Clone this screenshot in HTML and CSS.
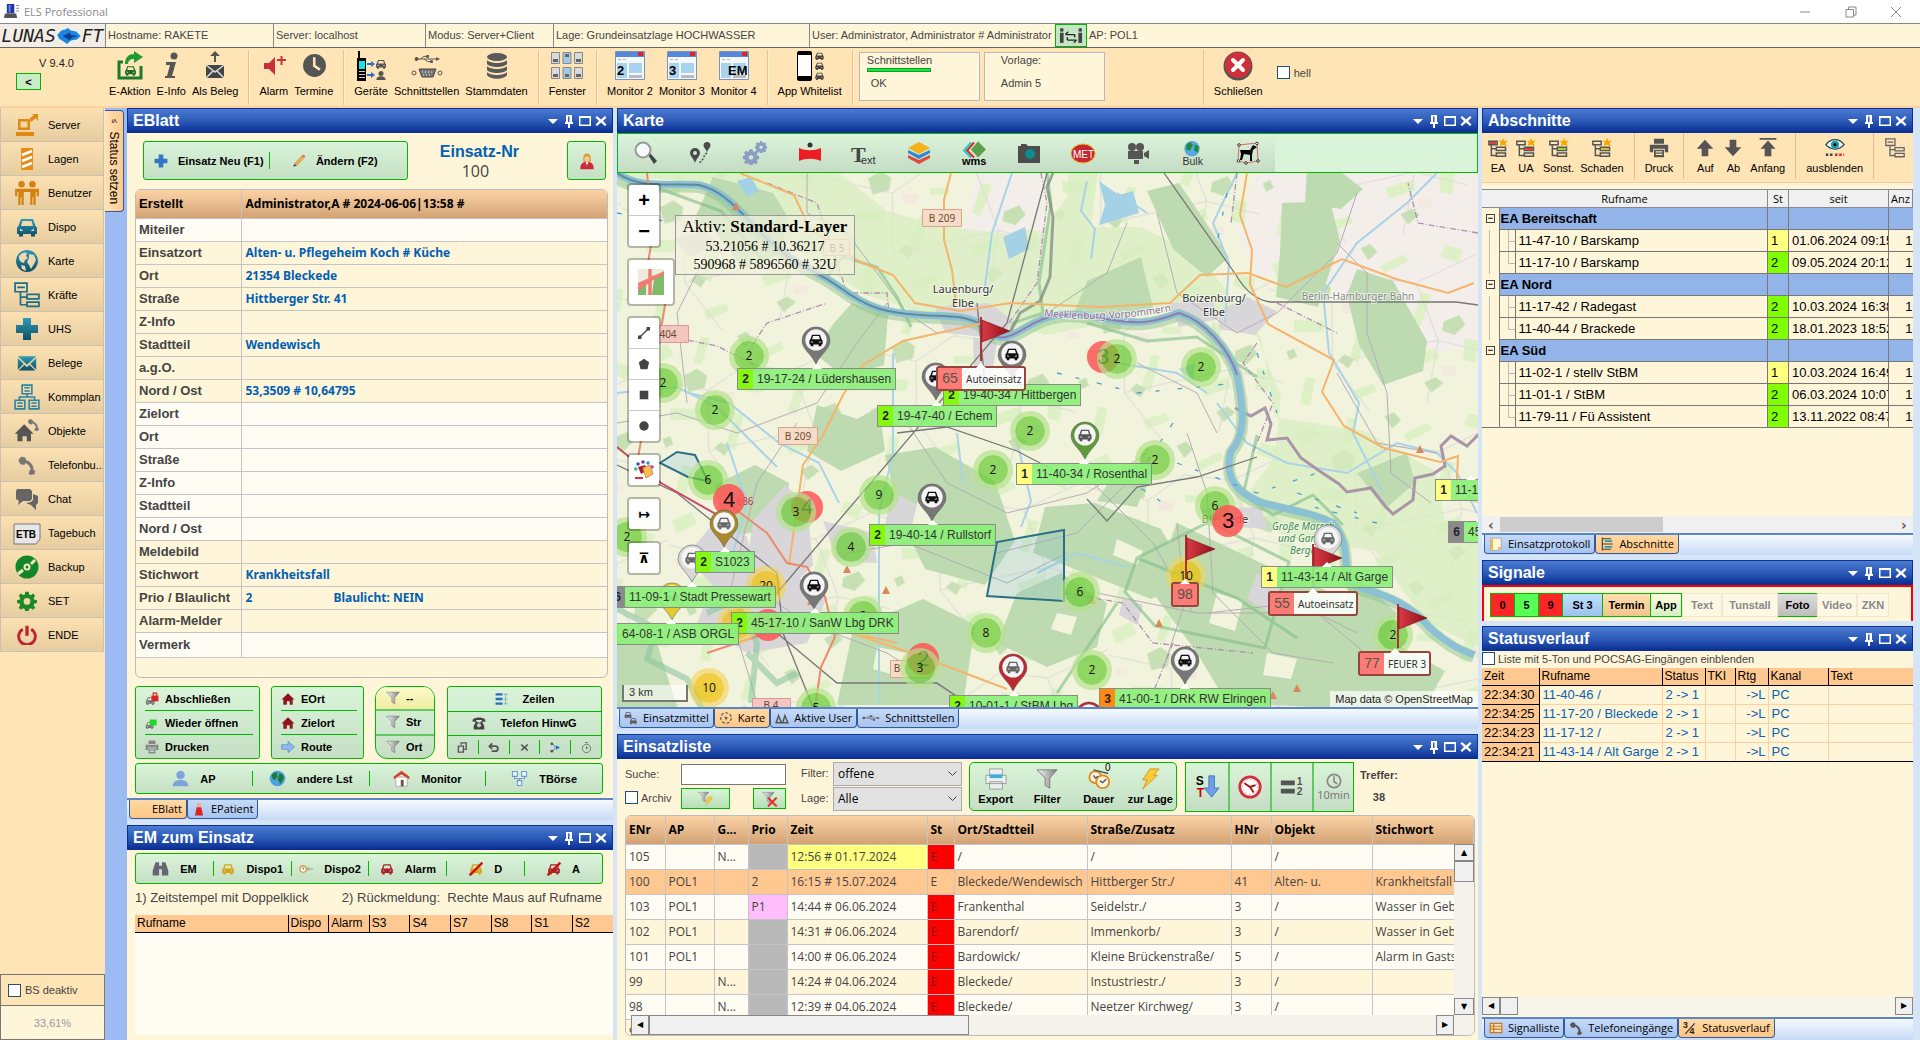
FILE: index.html
```html
<!DOCTYPE html>
<html lang="de">
<head>
<meta charset="utf-8">
<title>ELS Professional</title>
<link rel="stylesheet" href="styles.css">
</head>
<body>
<svg class="sprite" aria-hidden="true">
  <defs>
    <linearGradient id="gTeal" x1="0" y1="0" x2="0" y2="1"><stop offset="0" stop-color="#2f9ab5"/><stop offset="1" stop-color="#0e4f66"/></linearGradient>
    <linearGradient id="gFlag" x1="0" y1="0" x2="1" y2="0"><stop offset="0" stop-color="#d93a46"/><stop offset="1" stop-color="#8d1118"/></linearGradient>
    <linearGradient id="gSilver" x1="0" y1="0" x2="1" y2="0"><stop offset="0" stop-color="#fafafa"/><stop offset="1" stop-color="#7d7d7d"/></linearGradient>
  </defs>
  <symbol id="car" viewBox="0 0 24 24"><path fill-rule="evenodd" d="M6 4h12l2.500 7 1.500 1.500V19h-2v2.500h-4V19H8v2.500H4V19H2v-6.500L3.500 11zM7.500 6 6 11h12l-1.500-5zM5 13.500v2.500h3.500zM19 13.500v2.500h-3.500z"/></symbol>
  <symbol id="tri" viewBox="0 0 16 16"><path d="M3 6h10l-5 5z"/></symbol>
  <symbol id="thumbtack" viewBox="0 0 16 16"><path d="M5 2h6v7h1v2H9v4H7v-4H4V9h1zM7 3.500V9h1.500V3.500z" fill-rule="evenodd"/></symbol>
  <symbol id="maxi" viewBox="0 0 16 16"><path d="M2 3h12v10H2zM3.500 5v6.500h9V5z" fill-rule="evenodd"/></symbol>
  <symbol id="cross" viewBox="0 0 16 16"><path d="m4 3 4 3.500L12 3l1.500 1.500L10 8l3.500 3.500L12 13 8 9.500 4 13l-1.500-1.500L6 8 2.500 4.500z"/></symbol>
  <symbol id="house" viewBox="0 0 24 24"><path d="m12 2 11 11h-3v9h-5v-6h-5v6H4v-9H1z"/></symbol>
  <symbol id="plus" viewBox="0 0 24 24"><path d="M8 1h8v7h7v8h-7v7H8v-7H1V8h7z"/></symbol>
  <symbol id="globe" viewBox="0 0 24 24"><circle cx="12" cy="12" r="11"/><path fill="#eed9ae" d="M4 7c3-4 7-4 8-3l-1 3 2 2-3 2-1 3-3-1-2-3zM14 5l5 1 2 5-2 4-3 5-2-4-2-3 2-4zM6 16l4 1 1 5-4-2z"/></symbol>
  <symbol id="tree" viewBox="0 0 24 24"><path fill="none" stroke="currentColor" stroke-width="1.600" d="M1 1h11v8H1zM3 5h7M6 9v12h6M6 14h6M12 11.500h11v4H12zM12 18.500h11v4H12z"/></symbol>
  <symbol id="mail" viewBox="0 0 24 24"><path d="M1 4h22L12 14zM1 6l7 7-7 7zM23 6v14l-7-7zM2 21l7-7 3 3 3-3 7 7z"/></symbol>
  <symbol id="phone" viewBox="0 0 24 24"><path d="M1.500 6 5 2l5 1 1 3c6 2.500 9 7 9 12l2 1.500-1 3.500-5 1-2-1.500 1-4 1.500-1c-.5-4-3-6.500-6.500-8L9 12l-5-1z"/></symbol>
  <symbol id="org" viewBox="0 0 24 24"><path fill="none" stroke="currentColor" stroke-width="1.500" d="M7.500 1h9v8h-9zM1 15h9v8H1zM14 15h9v8h-9zM12 9v3M5 15v-3h14v3M9.500 3.500h5M9.500 6.500h5M3 17.500h5M3 20.500h5M16 17.500h5M16 20.500h5"/></symbol>
  <symbol id="funnel" viewBox="0 0 24 24"><path fill="url(#gSilver)" stroke="#777" d="M1 2h22l-8 9v11l-5-3v-8z"/></symbol>
  <symbol id="printer" viewBox="0 0 24 24"><path d="M6 1h12v6H6zM1 8h22v9h-4v-4H5v4H1zM6 14h12v9H6zM8 16h8v1.500H8zM8 19h8v1.500H8z" fill-rule="evenodd"/></symbol>
  <symbol id="clock" viewBox="0 0 24 24"><path fill-rule="evenodd" d="M12 1a11 11 0 1 1 0 22 11 11 0 0 1 0-22zM10.500 4v9l6 4 1.500-2-5-3.500V4z"/></symbol>
  <symbol id="gear" viewBox="0 0 24 24"><path fill-rule="evenodd" d="M10 1h4l.6 3.200 2 .9L19.300 3l2.500 2.600-1.800 2.700.9 2.200 3.100.5v3.500l-3.200.6-.9 2.100 1.900 2.800-2.500 2.500-2.700-1.900-2.100.9-.6 3h-4l-.6-3-2.100-.9L4.600 22.500 2 20l1.900-2.800-.9-2.100-3-.6V11l3-.6.9-2.100L2 5.600 4.600 3l2.700 1.900 2.100-.8zM12 8.500a4 4 0 1 0 0 8 4 4 0 0 0 0-8z"/></symbol>
  <symbol id="win" viewBox="0 0 30 30"><path fill="#f4f8fc" stroke="#7d93b8" d="M.5.5h29v28H.5z"/><path fill="#5588dd" d="M1 1h28v5H1z"/><path fill="#d22" d="M23 1h5v4h-5z"/><path fill="#a9d4f0" d="M2 12h10v15H2zM14 12h13v10H14z"/><path fill="#bbb" d="M14 24h13v3H14zM3 8h3v1H3zM8 8h3v1H8z"/></symbol>
  <symbol id="eatree" viewBox="0 0 24 24"><path fill="none" stroke="#555" stroke-width="1.800" d="M1 4h10v4H1zM4 8v13h6M4 13h6M10 11h11v4H10zM10 18h11v4H10z"/><path fill="#f5a800" d="m18 0 1.700 3.500 4.300-.5-3 3 1.500 4-4.500-2-4 2 1.200-4-2.200-3 3.500.5z"/></symbol>
  <symbol id="pin" viewBox="0 0 32 42"><path fill="currentColor" stroke="#555" stroke-width=".6" d="M16 1a15 15 0 0 1 15 15c0 9-10 14-15 25C11 30 1 25 1 16A15 15 0 0 1 16 1z"/><circle cx="16" cy="15" r="11.500" fill="#f5f5f5"/><use href="#car" x="7.500" y="6.500" width="17" height="17" fill="var(--car,#111)"/></symbol>
  <symbol id="flag" viewBox="0 0 32 46"><path fill="#a33" d="M1 1h2v44H1z"/><path fill="url(#gFlag)" stroke="#7a1015" stroke-width=".6" d="m3 4 28 11L3 26z"/></symbol>
  <symbol id="glass" viewBox="0 0 24 24"><path d="m15 14 2-2 7 8-3 3z" fill="#444"/><circle cx="10" cy="9" r="7.500" fill="#f6f9fa" stroke="#999" stroke-width="2"/></symbol>
  <symbol id="man" viewBox="0 0 24 24"><circle cx="12" cy="7" r="6"/><path d="M1 23c0-6 4-9 11-9s11 3 11 9z"/></symbol>
  <symbol id="usb" viewBox="0 0 40 12"><path d="M2 6h34M10 6l5-4h5M16 6l5 4h5" fill="none" stroke="currentColor" stroke-width="1.500"/><circle cx="4" cy="6" r="3"/><path d="m34 3 6 3-6 3zM19 0h4v4h-4zM25 8h4v4h-4z"/></symbol>
  <symbol id="bolt" viewBox="0 0 24 24"><path fill="#fbcb3a" stroke="#d89316" d="M12 1h10l-6 7h4L4 23l5-10H4z"/></symbol>
</svg>

<div class="titlebar">
  <svg class="lamp" viewBox="0 0 16 16"><path fill="#2338a8" d="M3 0h8v10H3z"/><path fill="#6a86e8" d="M5 1h2v8H5z"/><path fill="#555" d="M1 10h12l1 5H0z"/><path fill="#888" d="M13 1h3v1h-3zM13 4h3v1h-3zM13 7h3v1h-3z"/></svg>
  <span>ELS Professional</span>
  <div class="wincontrols">
    <button aria-label="Minimieren"><svg viewBox="0 0 12 12"><path d="M1 6h10"/></svg></button>
    <button aria-label="Verkleinern"><svg viewBox="0 0 12 12"><path d="M1 3.500h7.500V11H1zM3.500 3V1H11v8H9"/></svg></button>
    <button aria-label="Beenden"><svg viewBox="0 0 12 12"><path d="m1 1 10 10M11 1 1 11"/></svg></button>
  </div>
</div>

<div class="infobar">
  <div class="logo"><span>LUNAS</span><svg viewBox="0 0 26 20"><path fill="#1d86e0" d="M0 9c3-4 5-6 8-6l4-2 3 3 6 1 5 5-4 4-7 1-4 4-4-3-5-3z"/><path fill="#0c3f92" d="M6 10l8-4 1 3 8 1-7 2-2 3z"/></svg><span>FT</span></div>
  <span class="cell c-host">Hostname: RAKETE</span>
  <span class="cell c-server">Server: localhost</span>
  <span class="cell c-mode">Modus: Server+Client</span>
  <span class="cell c-lage">Lage: Grundeinsatzlage HOCHWASSER</span>
  <span class="cell c-user">User: Administrator, Administrator # Administrator</span>
  <button class="swap" aria-label="Benutzer wechseln"><svg viewBox="0 0 26 18"><circle cx="3" cy="3" r="2"/><path d="M1 6h4v11H1z"/><circle cx="23" cy="3" r="2"/><path d="M21 6h4v11h-4z"/><path d="M7 8h10M7 8l3-3M17 8v3M19 14H9M19 14l-3 3M9 14v-3" fill="none" stroke="#222" stroke-width="1.500"/></svg></button>
  <span class="cell c-ap">AP: POL1</span>
</div>

<div class="toolbar">
  <div class="version"><span>V 9.4.0</span><button>&lt;</button></div>
  <div class="tgroup">
    <button class="tool"><svg viewBox="0 0 28 30"><path fill="none" stroke="#1b7a2c" stroke-width="3" d="M7 11H3v16h22V15"/><path fill="#1f9a35" d="M9 13c0-7 4-10 9-10V0l9 6-9 6V8c-4 0-6 2-6 5z"/><use href="#car" x="8" y="13" width="13" height="13" fill="#1b6a2c"/></svg>E-Aktion</button>
    <button class="tool"><svg viewBox="0 0 28 30"><circle cx="17" cy="5" r="3.500" fill="#555"/><path fill="#555" d="M9 11h10l-4 14h3v2H8v-2h2l3-11H9z"/></svg>E-Info</button>
    <button class="tool"><svg viewBox="0 0 28 30"><path fill="#555" d="m14 0 5 5h-4v6h-2V5H9z"/><path fill="#444" d="M5 14h18v13H5z"/><path fill="none" stroke="#ddd" stroke-width="1.500" d="m5 14 9 7 9-7M5 27l7-7M23 27l-7-7"/></svg>Als Beleg</button>
  </div>
  <div class="tgroup">
    <button class="tool"><svg viewBox="0 0 28 30"><path fill="#c9303a" d="M4 12h5l6-6v18l-6-6H4z"/><path stroke="#c9303a" stroke-width="2" d="M17 9h9M21.500 5v9"/></svg>Alarm</button>
    <button class="tool"><svg viewBox="0 0 28 30"><use href="#clock" x="2" y="2" width="25" height="25" fill="#555"/></svg>Termine</button>
  </div>
  <div class="tgroup">
    <button class="tool"><svg class="w32" viewBox="0 0 32 30"><path d="M3 0h2v7h6v23H2V7h1z"/><path fill="#18e0e8" d="M4 10h6v8H4z"/><path fill="#ccc" d="M4 20h6v1H4zM4 23h6v1H4zM4 26h6v1H4z"/><path fill="#2a6fd0" d="M12 12h4v-2l4 3-4 3v-2h-4zM12 23h4v-2l4 3-4 3v-2h-4z"/><use href="#car" x="20" y="7" width="12" height="12" fill="#555"/><use href="#man" x="21" y="19" width="10" height="11" fill="#555"/></svg>Geräte</button>
    <button class="tool"><svg class="w32" viewBox="0 0 32 30"><use href="#usb" x="3" y="3" width="26" height="10" fill="#555" color="#555"/><path fill="#777" stroke="#444" d="M8 18h17l-3 8H11z"/><circle cx="3" cy="22" r="2" fill="none" stroke="#555"/><circle cx="29" cy="22" r="2" fill="none" stroke="#555"/><path stroke="#eee" stroke-dasharray="1 2" d="M11 21h11M12 24h9"/></svg>Schnittstellen</button>
    <button class="tool"><svg viewBox="0 0 28 30"><g fill="#5a5a5a"><ellipse cx="14" cy="6" rx="10" ry="4"/><path d="M4 9c3 4 17 4 20 0v4c-3 4-17 4-20 0zM4 15c3 4 17 4 20 0v4c-3 4-17 4-20 0zM4 21c3 4 17 4 20 0v3c-3 5-17 5-20 0z"/></g></svg>Stammdaten</button>
  </div>
  <div class="tgroup">
    <button class="tool"><svg class="w32" viewBox="0 0 32 30"><g fill="#d8dadc" stroke="#888"><path d="M.5 1.500h8v11h-8zM23.500 1.500h8v11h-8zM.5 16.500h8v11h-8zM23.500 16.500h8v11h-8z"/><path fill="#9ccbe8" d="M12 1.500h8v11h-8zM12 16.500h8v11h-8z"/></g><path fill="#666" d="M2 8h5v3H2zM14 3h4v3h-4zM25 8h5v3h-5zM2 23h5v3H2zM14 23h4v3h-4zM25 23h5v3h-5z"/></svg>Fenster</button>
  </div>
  <div class="tgroup">
    <button class="tool"><svg class="w32" viewBox="0 0 30 30"><use href="#win"/><text x="2" y="24">2</text></svg>Monitor 2</button>
    <button class="tool"><svg class="w32" viewBox="0 0 30 30"><use href="#win"/><text x="2" y="24">3</text></svg>Monitor 3</button>
    <button class="tool"><svg class="w32" viewBox="0 0 30 30"><use href="#win"/><text x="9" y="24">EM</text></svg>Monitor 4</button>
  </div>
  <div class="tgroup">
    <button class="tool"><svg class="w32" viewBox="0 0 32 30"><rect x="3" width="15" height="30" rx="2"/><path fill="#fff" d="M4 4h13v21H4z"/><use href="#car" x="20" width="11" height="10" fill="#444"/><use href="#car" x="20" y="10" width="11" height="10" fill="#444"/><use href="#car" x="20" y="20" width="11" height="10" fill="#444"/></svg>App Whitelist</button>
  </div>
  <div class="statusboxes">
    <div class="sbox"><span>Schnittstellen</span><i class="ok-line"></i><span class="ind">OK</span></div>
    <div class="sbox tmpl"><span>Vorlage:</span><span>Admin 5</span></div>
  </div>
  <div class="tgroup">
    <button class="tool"><svg class="w32" viewBox="0 0 32 30"><circle cx="16" cy="15" r="14.500" fill="#555"/><circle cx="16" cy="14" r="13" fill="#cf2f38"/><path stroke="#fff" stroke-width="4" stroke-linecap="round" d="m11 9 10 10M21 9 11 19"/></svg>Schließen</button>
  </div>
  <label class="hell"><input type="checkbox">hell</label>
</div>

<div class="workspace">
  <nav class="side">
    <button><svg viewBox="0 0 24 24" fill="#e08a12"><path d="M3 6h12v11H3zM5.500 8.500v6h7v-6zM1 19h18v4H1zM14 6l5-4-3-1h7v7l-2-3-5 4z" fill-rule="evenodd"/></svg>Server</button>
    <button><svg viewBox="0 0 24 24"><path fill="#e58d14" d="M6 1h12v22H6z"/><path stroke="#fff" stroke-width="2.500" d="m7 8 10-4M7 14l10-4M7 20l10-4"/></svg>Lagen</button>
    <button><svg class="big" viewBox="0 0 24 24" fill="#d5810f"><circle cx="7" cy="4" r="3"/><circle cx="17" cy="4" r="3"/><path d="M1 8h22v7h-2v-4h-1v12h-2v-7h-1v7h-2V11h-6v12H7v-7H6v7H4V11H3v4H1z"/></svg>Benutzer</button>
    <button><svg fill="url(#gTeal)"><use href="#car"/></svg>Dispo</button>
    <button><svg fill="url(#gTeal)"><use href="#globe"/></svg>Karte</button>
    <button><svg class="big" color="#1d6f88"><use href="#tree"/></svg>Kräfte</button>
    <button><svg fill="url(#gTeal)"><use href="#plus"/></svg>UHS</button>
    <button><svg class="small" fill="url(#gTeal)"><use href="#mail"/></svg>Belege</button>
    <button><svg class="big" color="#2a86a0"><use href="#org"/></svg>Kommplan</button>
    <button><svg class="big" viewBox="0 0 28 28"><use href="#house" y="5" width="22" height="22" fill="#555"/><use href="#phone" x="14" width="14" height="14" fill="#777"/></svg>Objekte</button>
    <button><svg class="small" fill="#777"><use href="#phone"/></svg>Telefonbu...</button>
    <button><svg viewBox="0 0 24 24" fill="#666"><path d="M2 2h13l2 2v8l-2 2H8l-5 4 1-4-3-2V4zM18 7l5 2v7l-2 2v5l-5-5-5-2 5-1 2-2z"/></svg>Chat</button>
    <button><svg class="big" viewBox="0 0 28 24"><path fill="#e6e6e6" stroke="#777" d="M1 3h26v15l-4 5H1z"/><text class="etb" x="3" y="17">ETB</text></svg>Tagebuch</button>
    <button><svg viewBox="0 0 24 24"><circle cx="12" cy="12" r="11.500" fill="#14862a"/><circle cx="12" cy="12" r="3.500" fill="#f4e4c0"/><circle cx="12" cy="12" r="1.500" fill="#14862a"/><path stroke="#f4e4c0" stroke-width="3" d="m3 19 5-4M16 9l4-4"/></svg>Backup</button>
    <button><svg class="small" fill="#1a8a26"><use href="#gear"/></svg>SET</button>
    <button><svg class="small" viewBox="0 0 24 24"><path fill="none" stroke="#bd2630" stroke-width="3.500" d="M7 5a10 10 0 1 0 10 0"/><path stroke="#bd2630" stroke-width="4" d="M12 1v12"/></svg>ENDE</button>
    <div class="side-foot">
      <label><input type="checkbox">BS deaktiv</label>
      <span>33,61%</span>
    </div>
  </nav>

  <div class="strip"><button class="vtab"><span class="vicon">≤</span>Status setzen</button></div>

  <main class="cols">
  <div class="col">
    <section class="panel eblatt">
      <header class="bar"><h2>EBlatt</h2><button aria-label="Menü"><svg><use href="#tri"/></svg></button><button aria-label="Anheften"><svg><use href="#thumbtack"/></svg></button><button aria-label="Maximieren"><svg><use href="#maxi"/></svg></button><button aria-label="Schließen"><svg><use href="#cross"/></svg></button></header>
      <div class="eb-top">
        <div class="gbox eb-main">
          <button><svg fill="#3276c4"><use href="#plus"/></svg>Einsatz Neu (F1)</button>
          <button><svg viewBox="0 0 24 24"><path fill="#f0b040" stroke="#a86" d="m4 17 13-14 4 3L8 20z"/><path fill="#444" d="m2 22 2-5 4 3z"/><path fill="#d66" d="m17 3 2-2 4 3-2 2z"/></svg>Ändern (F2)</button>
        </div>
        <div class="enr"><b>Einsatz-Nr</b><span>100</span></div>
        <button class="gbox person" aria-label="Melder"><svg viewBox="0 0 24 24"><path fill="#e09a2e" d="M7 8a5 6 0 0 1 10 0v5H7z"/><circle cx="12" cy="9" r="3.500" fill="#f5c9a0"/><path fill="#cf2a3a" d="M3 23c0-7 3-10 9-10s9 3 9 10z"/><path fill="#fff" d="m10 13 2 5 2-5z"/></svg></button>
      </div>
      <div class="ebwrap">
      <table class="ebtable">
        <thead><tr><th>Erstellt</th><th>Administrator,A # 2024-06-06|13:58 #</th></tr></thead>
        <tbody>
        <tr class="w"><th>Miteiler</th><td></td></tr>
        <tr><th>Einsatzort</th><td>Alten- u. Pflegeheim Koch # Küche</td></tr>
        <tr><th>Ort</th><td>21354 Bleckede</td></tr>
        <tr><th>Straße</th><td>Hittberger Str. 41</td></tr>
        <tr><th>Z-Info</th><td></td></tr>
        <tr><th>Stadtteil</th><td>Wendewisch</td></tr>
        <tr><th>a.g.O.</th><td></td></tr>
        <tr><th>Nord / Ost</th><td>53,3509 # 10,64795</td></tr>
        <tr class="w"><th>Zielort</th><td></td></tr>
        <tr class="w"><th>Ort</th><td></td></tr>
        <tr class="w"><th>Straße</th><td></td></tr>
        <tr class="w"><th>Z-Info</th><td></td></tr>
        <tr class="w"><th>Stadtteil</th><td></td></tr>
        <tr class="w"><th>Nord / Ost</th><td></td></tr>
        <tr><th>Meldebild</th><td></td></tr>
        <tr><th>Stichwort</th><td>Krankheitsfall</td></tr>
        <tr><th>Prio / Blaulicht</th><td><span class="prio">2</span>Blaulicht: NEIN</td></tr>
        <tr><th>Alarm-Melder</th><td></td></tr>
        <tr class="w last"><th>Vermerk</th><td></td></tr>
        </tbody>
      </table>
      </div>
      <div class="eb-actions">
        <div class="gbox stack s1">
          <button><svg viewBox="0 0 24 24"><use href="#car" y="6" width="18" height="18" fill="#777"/><path fill="#d22" d="M11 6h12v10H11z"/><path fill="none" stroke="#d22" stroke-width="2" d="M14 6V2h6v4"/></svg>Abschließen</button>
          <button><svg viewBox="0 0 24 24"><use href="#car" y="8" width="16" height="16" fill="#777"/><path fill="#1ddb26" d="M8 6h12v10H8z"/><path fill="none" stroke="#ddd" stroke-width="2" d="M16 6V2h6v4"/></svg>Wieder öffnen</button>
          <button><svg fill="#888"><use href="#printer"/></svg>Drucken</button>
        </div>
        <div class="gbox stack s2">
          <button><svg fill="#8f1420"><use href="#house"/></svg>EOrt</button>
          <button><svg fill="#8f1420"><use href="#house"/></svg>Zielort</button>
          <button><svg viewBox="0 0 24 24"><path fill="#8fb8f0" stroke="#4a78c8" d="M1 8h11V2l11 10-11 10v-6H1z"/></svg>Route</button>
        </div>
        <div class="gbox stack s3">
          <button><svg><use href="#funnel"/></svg>--</button>
          <button><svg><use href="#funnel"/></svg>Str</button>
          <button><svg><use href="#funnel"/></svg>Ort</button>
        </div>
        <div class="gbox stack s4">
          <button><svg viewBox="0 0 24 24"><path fill="#2a6fc0" d="M1 2h12v4H1zM1 10h12v4H1zM1 18h12v4H1z"/><path fill="none" stroke="#9bb" stroke-width="2" d="M15 4h7M15 12h7M15 20h7M18 2v20"/></svg>Zeilen</button>
          <button><svg viewBox="0 0 24 24" fill="#444"><path d="M1 8c0-7 22-7 22 0v2h-6V7H7v3H1zM7 9h2v2h6V9h2l4 8v6H3v-6z"/><circle cx="12" cy="16" r="3.500" fill="#ccc"/></svg>Telefon HinwG</button>
          <div class="mini">
            <button aria-label="Kopieren"><svg viewBox="0 0 24 24"><path d="M3 9h11v13H3zM9 6V2h11v14h-4" fill="none" stroke="#555" stroke-width="3"/></svg></button>
            <button aria-label="Rückgängig"><svg viewBox="0 0 24 24"><path d="M3 9h13a5 5 0 0 1 0 11H8M9 3 3 9l6 6" fill="none" stroke="#555" stroke-width="4"/></svg></button>
            <button aria-label="Löschen"><svg fill="#555"><use href="#cross"/></svg></button>
            <button aria-label="Verteilen"><svg viewBox="0 0 24 24"><path d="M6 4l6 8-6 8" fill="none" stroke="#4a78c8" stroke-width="2"/><g fill="#555"><circle cx="4" cy="4" r="3"/><circle cx="4" cy="20" r="3"/><path fill="#2a6fd0" d="m13 7 9 5-9 5z"/></g></svg></button>
            <button aria-label="Zeit"><svg viewBox="0 0 24 24"><path d="M12 5a9 9 0 1 0 .1 0zM12 9v6l4-3M9 1h6" fill="none" stroke="#666" stroke-width="2"/></svg></button>
          </div>
        </div>
      </div>
      <div class="gbox hrow four">
        <button><svg class="i18" fill="#7ea4dc"><use href="#man"/></svg>AP</button>
        <button><svg class="i18" viewBox="0 0 24 24"><circle cx="12" cy="12" r="11" fill="#4aa3e0"/><path fill="#1d7a32" d="M4 7c3-4 7-4 8-3l-1 3 2 2-3 2-1 3-3-1-2-3zM14 5l5 1 2 5-2 4-3 5-2-4-2-3 2-4z"/></svg>andere Lst</button>
        <button><svg class="i18" viewBox="0 0 24 24"><path fill="#fff" stroke="#999" d="M4 10h16v13H4z"/><path fill="#d2402c" d="m12 1 11 8v4L12 6 1 13V9z"/><path fill="#654" d="M11 14h4v9h-4z"/></svg>Monitor</button>
        <button><svg class="i18" viewBox="0 0 24 24"><path fill="#eef6ff" stroke="#6a9ad0" stroke-width="1.500" d="M2 2h7v7H2zM15 2h7v7h-7zM9 15h6v7H9zM5 9v3h14V9M12 12v3"/></svg>TBörse</button>
      </div>
      <div class="tabs">
        <button class="tab on ebt">EBlatt</button>
        <button class="tab"><svg viewBox="0 0 24 24"><circle cx="12" cy="5" r="4" fill="#e7b48c"/><path fill="#d22" d="M8 9h8l3 14H5z"/></svg>EPatient</button>
      </div>
    </section>

    <section class="panel grow em">
      <header class="bar"><h2>EM zum Einsatz</h2><button aria-label="Menü"><svg><use href="#tri"/></svg></button><button aria-label="Anheften"><svg><use href="#thumbtack"/></svg></button><button aria-label="Maximieren"><svg><use href="#maxi"/></svg></button><button aria-label="Schließen"><svg><use href="#cross"/></svg></button></header>
      <div class="gbox hrow six">
        <button><svg class="i18" viewBox="0 0 24 24" fill="#667"><path d="M5 3h5v5h4V3h5l4 12v7h-9v-9h-4v9H1v-7z"/></svg>EM</button>
        <button><svg fill="#d8a312"><use href="#car"/></svg>Dispo1</button>
        <button><svg viewBox="0 0 24 24"><circle cx="7" cy="12" r="5.500" fill="#fff" stroke="#d98a30" stroke-width="2"/><path stroke="#999" stroke-width="2" d="M7 9v3h2M14 12h10M16 9v6"/></svg>Dispo2</button>
        <button><svg fill="#a8202a"><use href="#car"/></svg>Alarm</button>
        <button><svg viewBox="0 0 24 24"><use href="#car" fill="#d8a312"/><path stroke="#c11" stroke-width="4" d="M1 23 23 1"/></svg>D</button>
        <button><svg viewBox="0 0 24 24"><use href="#car" fill="#a8202a"/><path stroke="#c11" stroke-width="4" d="M1 23 23 1"/></svg>A</button>
      </div>
      <p class="hints"><span>1) Zeitstempel mit Doppelklick</span><span>2) Rückmeldung:&nbsp; Rechte Maus auf Rufname</span></p>
      <div class="emlist">
        <table class="grid13">
          <thead><tr><th class="em-n">Rufname</th><th>Dispo</th><th>Alarm</th><th>S3</th><th>S4</th><th>S7</th><th>S8</th><th>S1</th><th>S2</th></tr></thead>
        </table>
      </div>
    </section>
  </div>

  <div class="col">
    <section class="panel grow">
      <header class="bar"><h2>Karte</h2><button aria-label="Menü"><svg><use href="#tri"/></svg></button><button aria-label="Anheften"><svg><use href="#thumbtack"/></svg></button><button aria-label="Maximieren"><svg><use href="#maxi"/></svg></button><button aria-label="Schließen"><svg><use href="#cross"/></svg></button></header>
      <div class="maptools">
        <div class="mt-in">
        <button aria-label="Suchen"><svg><use href="#glass"/></svg></button>
        <button aria-label="Route"><svg viewBox="0 0 24 24"><path fill="#4a4a4a" fill-rule="evenodd" d="M7 7a5 5 0 0 1 5 5c0 3-4 6-5 10-1-4-5-7-5-10a5 5 0 0 1 5-5zM7 10a2 2 0 1 0 0 4 2 2 0 0 0 0-4zM19 1a3.500 3.500 0 0 1 3.500 3.500c0 2-3 4-3.500 7-.5-3-3.500-5-3.500-7A3.500 3.500 0 0 1 19 1z"/><path fill="none" stroke="#555" stroke-dasharray="2 1.500" stroke-width="1.500" d="M19 12c-4 2-2 6-8 10"/></svg></button>
        <button aria-label="Einstellungen"><svg viewBox="0 0 24 24" fill="#8e9cc8" stroke="#5a6aa0" stroke-width=".5"><use href="#gear" y="8" width="16" height="16"/><use href="#gear" x="12" y="0" width="12" height="12"/></svg></button>
        <button aria-label="Panorama"><svg viewBox="0 0 24 24"><circle cx="12" cy="4" r="2.500" fill="#333"/><path fill="#ee1c24" d="M1 7c7 3 15 3 22 0v13c-7-3-15-3-22 0z"/></svg></button>
        <button aria-label="Text"><svg class="w26" viewBox="0 0 26 24"><text class="bigt" x="0" y="20">T</text><text class="ext" x="10" y="22">ext</text></svg></button>
        <button aria-label="Ebenen"><svg viewBox="0 0 24 24"><path fill="#e04a3a" d="m1 17 11 6 11-6v-3l-11 5-11-5z"/><path fill="#2f86d6" d="m1 12 11 6 11-6v-3l-11 5L1 9z"/><path fill="#f7b21a" d="m12 1 11 6-11 6L1 7z"/></svg></button>
        <button aria-label="WMS"><svg class="w26" viewBox="0 0 26 24"><path fill="#5aa04a" d="m17 0 8 8-8 8-7-8z"/><path fill="none" stroke="#16d0d8" stroke-width="2" d="m10 1-7 8 7 7"/><path fill="none" stroke="#e22" stroke-width="2" d="m13 1-7 8 7 7"/><text class="wms" x="1" y="23">wms</text></svg></button>
        <button aria-label="Foto"><svg viewBox="0 0 24 24"><path fill="#4c4c4c" d="M1 5h3V3h5l2 2h12v17H1z"/><circle cx="13" cy="13" r="5" fill="#0c8c90"/></svg></button>
        <button aria-label="MET"><svg class="w26" viewBox="0 0 26 24"><ellipse cx="13" cy="12" rx="12" ry="9.500" fill="#c5282e" stroke="#e8b820"/><text class="met" x="3" y="16">MET</text></svg></button>
        <button aria-label="Video"><svg viewBox="0 0 24 24" fill="#555"><circle cx="6" cy="6" r="4"/><circle cx="14" cy="6" r="4"/><path d="M2 10h15v8H2zM18 12l5-3v9l-5-3zM8 19h5v4H8z"/></svg></button>
        <button aria-label="Bulk"><svg class="w26" viewBox="0 0 26 26"><circle cx="12" cy="8" r="8" fill="#5aa8dc"/><path fill="#1d8a42" d="M6 4l4-3 3 3-3 6-4-1zM15 3l4 3-1 6-4-2z"/><text class="bulk" x="2" y="25">Bulk</text></svg></button>
        <button aria-label="Suchhund"><svg viewBox="0 0 24 24"><path fill="none" stroke="#d66" d="M3 4 21 2l1 18-12 2-8-2z"/><path d="M4 9h10l3-5 4 2-4 3-1 5v6h-2v-6l-6-1-2 6H4l1-6z"/><g fill="#fff" stroke="#333"><circle cx="3" cy="4" r="1.300"/><circle cx="21" cy="2.500" r="1.300"/><circle cx="22" cy="20" r="1.300"/><circle cx="10" cy="22" r="1.300"/><circle cx="2.500" cy="20" r="1.300"/></g></svg></button>
        </div>
      </div>
      <div class="map">
        <svg class="ground" viewBox="0 0 861 534" preserveAspectRatio="xMinYMin slice">
          <defs>
            <pattern id="fields" width="210" height="170" patternUnits="userSpaceOnUse" patternTransform="rotate(-8)">
              <g fill="#def1c6"><path d="M6 12l20-6 5 12-22 8zM60 4l9 2-12 26-8-4zM112 28l26-8 4 7-26 9zM150 60l10 4-16 30-8-5zM20 70l30 5-3 11-29-4zM84 84l8 3-14 34-9-5zM180 16l18 8-8 12-16-9zM128 122l28-5 3 11-27 5zM24 128l9 3-9 26-10-4zM186 112l14 4-6 22-12-5zM66 148l24-4 2 8-23 6zM98 58l20 3-3 7-18-3z"/></g>
              <g fill="#c6e0b4"><path d="M38 40l14-5 9 8-4 12-17 2zM96 8l10-3 6 9-10 7zM168 92l16-4 5 10-12 9-12-6zM58 116l7-5 9 6-7 8zM8 100l8-2 2 8-8 3zM140 150l12-4 7 7-13 8z"/></g>
              <g fill="#f3e9df"><path d="M70 60l16 3-3 9-14-2zM160 136l14 3-2 8-14-2zM4 50l12 2-2 6-11-1z"/></g>
              <path fill="none" stroke="#d9d6d9" stroke-width=".9" d="M0 36l60 22 40-20 46 12 64-20M60 58l-8 60 30 52M146 50l14 60-20 60M52 118l108-8 50 20"/>
            </pattern>
          </defs>
          <path fill="#f2f3dd" d="M0 0h1400v900H0z"/>
          <path fill="#f3eeea" d="M360 0h65l4 60-12 90-50 10-30-60zM640 0h221v170l-40 10-60-30-70-55-50 10-22-50z"/>
          <path fill="url(#fields)" d="M0 0h1400v900H0z"/>
          <path fill="#d7eebf" opacity=".7" d="M0 4l80 4 40 20 60 50 70 44 80 26 60 4 40 10 70-14 80-14 60 30 24 60-6 60-30 40 40 40 90 14 50 70 160 80v-70l-50-50-90-60-10-50-70-40-90-14-14-80-60-80-60-30h-50l10-80-10-60-20 20-4 90-30 40-90-10-60-16-100-80-60-50H0z"/>
          <g fill="#bddab0">
            <path d="M96 4l60 16 16 26-10 36-36 14-30-40-20-6zM235 130l36 12-4 50-40 12-30-24 20-30zM530 18l32-8 50 74-22 20-34-28zM665 30l48-2 10 40-22 66-42-10 4-44zM740 96l36 12 34 60-4 30-40 14-24-40-12-50zM470 108l54-24 12 50-50 16-28-12zM690 -4h30l26 20-22 20-36-6z"/>
            <path d="M200 232l40 14 22-12 6 44-44 20-34-20zM98 312l40-20 34 18-6 44-56 10zM268 282l50-8 60 34 20 60-30 44-60-16-24-50zM400 420l44-20 46 30-10 44-50 20-50-24zM236 456l70-30 52 26-12 80H220zM428 334l50-4 66 26 30 52-40 18-66-26-52-20zM560 350l84 40 80 34 16 54-40 56-90-4-30-50-44-60zM700 498l66-34 62 34-20 36H690zM736 400l44 40-24 60-44-20zM496 302l32 10-8 22-40-6zM0 460l40 10 20 64H0zM740 300l50-20 8 30-30 26z"/>
          </g>
          <g fill="#f2f3dd"><path d="M600 420l26 8-8 30-26-8zM300 330l20 6-10 24-18-8zM650 480l30 6-6 20-28-4zM440 440l20 4-6 18-20-6zM260 474l30 6-6 24-28-8zM500 366l26 12-6 14-24-10z"/></g>
          <g fill="#d8d6d8">
            <path d="M318 134l54-4 22 16-6 20-60-6zM356 164l24 6-8 50-14-4zM552 130l44-2 6 18-40 8zM602 138l28-14 30 14-22 24-36-6zM100 346l30 18 8 30-40 20-30-30zM168 312l22 20 6 60-30 30-40-4 10-70zM100 400l60-10 50 34-20 46-60 10-50-30zM206 348l50 12 4 30-40-2zM274 318l26 14-10 40-22-18zM506 424l20 8-6 20-18-10zM584 336l60-2 6 22-60-4zM640 400l28 18-14 22-24-14zM58 66l30-8 14 14-30 12z"/>
          </g>
          <g fill="none" stroke="#a9d3e6" stroke-width="2">
            <path d="M470 8l-6 30 14 18-4 30M500 20l30 20M72 220l40 10 50 40 40 20 20 40M0 220l60-6 40 20 60 60M395 0l-20 60-8 60M620 0l-24 50 16 40-4 60M820 0l-30 30-50 40-34 50 6 60 30 50-6 30 30 60M600 230l30 40 40 20 60 10 50-30 40 10 20 20 20 40M276 180v100l-14 60v190M110 270l20 60-14 50M500 190l60 10 30 20M400 268l14 60-10 26M340 260l6 50M420 400l40-20 50 14"/>
          </g>
          <g fill="#a5d1e6"><path d="M482 8l20 14 14-4 6 22-40 12 6-20zM386 64l22-10 4 22-20 10zM120 8l14-4 8 14-12 6zM562 196l16-6-2 18zM690 396l14 8-6 10z"/></g>
          <g fill="none" stroke="#b4adb5" stroke-width="1">
            <path d="M0 250l60-10 60 20 80-30 40-60 30-40M90 80l-30 60 10 90M190 0v40l40 20 60 80 30 20M430 140l60-40 20-50M540 40l20 80 60 40 40-20 60-60 20-60M720 70l30 30v60l20 60 4 80 40 30M520 190l60 30 20 40M180 250l-40 60-30 120 30 100M290 250l40 60 60 30 80-20 60-40M380 380l80-20 60-60M476 310l60 60 40 70M560 350l8 80-20 60M570 260l20 60 6 100 60 60 60 10M590 440l90-10 60 30M480 420l100 20 120 0 60 50M230 380l60-10 100 40 60-30M130 410l60 40 80 30 80 50M720 200l40 70 60 10"/>
          </g>
          <path fill="none" stroke="#b08fb0" stroke-dasharray="6 2 1 2" stroke-width="1.300" d="M620 0l-6 50M424 0l6 30-10 80-28 40M150 10l50 20 30 90 40 0 2 20 50 2M130 180l20-30 60-20M60 165l40 8 40 20M640 170l-14 20 30 40-20 50M861 60l-60-10-10-40M446 420l60 10 30 40 100 10M556 470l-20 50M660 130l60 30"/>
          <path fill="none" stroke="#86c08a" stroke-width="3" opacity=".65" d="M430 0l4 30-12 80 4 30-30 10-10 30M38 14l66 24 42 50M210 104l16-20 34 10 20 30 14 30M470 150l60 18 50-4 60 40M640 262l-14 60 30 20 40-20 30 30M520 385l-12 34 30 34 110 22 24-86-80-40zM520 385l100 40 60 40M440 520l60-90"/>
          <path fill="none" stroke="#7d8c7d" stroke-width="3" opacity=".75" d="M436 0l-6 14 6 30-3 60-10 24-20 12-12 24"/>
          <path fill="none" stroke="#a994a8" stroke-width="3" d="M618 235l16 8 14-8 6 16-4 16 20-2 14 20 20 14 18 12 8 8 24-4 14 18 8 8 20-14 2-22 18-4 12-8-4-20 10-10 16 10 16-16 22-4"/>
          <path fill="none" stroke="#8fc48f" stroke-width="12" opacity=".5" d="M0 6c20 12 50 6 82 8 26 6 40 26 66 52 30 30 50 32 74 50 30 22 48 26 82 28 30 2 50 0 62 12 14 16 24 12 44 0 20-12 38-16 68-10 50 10 60 4 84-4 26 8 50 36 58 62 8 40 8 60-6 76-6 22 0 40 32 52 30 8 50 10 70 20 16 20 12 40 14 56 10 14 50 10 82 48 20 18 30 22 45 28"/>
          <path fill="none" stroke="#8cc0d4" stroke-width="7" d="M0 0c24 16 50 10 82 12 26 6 40 26 66 52 30 30 50 32 74 50 30 22 48 26 82 28 30 2 50 0 62 12 14 16 24 12 44 0 20-12 38-16 68-10 50 10 60 4 84-4 26 8 50 36 58 62 8 40 8 60-6 76-6 22 0 40 32 52 30 8 50 10 70 20 16 20 12 40 14 56 10 14 50 10 82 48 20 18 30 22 45 28"/>
          <path fill="none" stroke="#5e8a9a" stroke-width="2" d="M0 0c24 16 50 10 82 12 26 6 40 26 66 52 30 30 50 32 74 50 30 22 48 26 82 28 30 2 50 0 62 12"/>
          <path fill="none" stroke="#8d7fa8" stroke-width="2" d="M366 154c14 16 24 12 44 0 20-12 38-16 68-10 50 10 60 4 84-4 26 8 50 36 58 62"/>
          <path fill="none" stroke="#8cc6a4" stroke-width="6" opacity=".6" d="M0 436l40 20-10 30 40 20 20 40M120 430l20 40-6 60M90 440l30-14M130 480l30 30 20-10"/>
          <path fill="none" stroke="#777" stroke-width="1.300" d="M547 0l72 102q14 24 34 27h186l22 3M0 292l60 28 100 80 6 60 30 74M160 420l230-270 40-150M280 260l50-6 70 24 50 26M470 326l20 22 30-34 60-10 60-20M160 460l60 50 100 0 50 34M360 130l6 60 4 40"/>
          <g fill="none" stroke="#f5b46c" stroke-width="2">
            <path d="M123 0l54 22 16 34 50 33 33 13 22 28 45 8 50-8 90 4 70-4 30-28 48-2 38 14 56-28 54 20 52 14 26-10M334 0l-7 27v40l8 30 4 34M630 0l-7 42 12 35-2 34 18 40 66 36-12 32 22 34 40 22 56 14 18-6-2 44M366 150l-80 18-40 24-20 30-20 40-20 30-14 100M280 470l-70-16M210 452l90 30 90 34"/>
          </g>
          <path fill="none" stroke="#ec8a70" stroke-width="2" d="M30 0l6 60-10 60M50 120l-10 60-20 110M110 330l40 30 20 30 20 4 18 30 10 40-14 30-6 40M90 480l60-20 50-10"/>
          <path fill="none" stroke="#c84a66" stroke-width="2" d="M0 274l44 36 60 34"/>
          <path fill="none" stroke="#4a9fd8" stroke-dasharray="5 14 4 18" stroke-width="1.300" d="M0 40l60 10M440 200l80 20 100-10M556 250l-40 60 30 20M560 290l80 30 60-20M640 180l20 60M680 320l60 20M760 350l-80-20M610 20l-10 50"/>
          <g fill="#d8895a"><path d="M115 37l4-8 4 8zM226 400l4-8 4 8zM190 432l5-9 5 9zM94 400l5-9 5 9zM265 421l4-8 4 8zM706 366l4-8 4 8zM471 431l4-8 4 8zM538 454l4-8 4 8zM652 526l4-8 4 8zM676 519l4-8 4 8zM799 280l4-8 4 8z"/></g>
          <g class="shield"><path fill="#f6dcc8" stroke="#d9a588" d="M305.500 36.500h39v17h-39zM161.500 254.500h39v17h-39zM206.500 66.500h26v16h-26zM273.500 487.500h39v17h-39z"/><path fill="#f3c6c0" stroke="#d99" d="M30.500 152.500h41v17h-41zM135.500 525.500h38v17h-38z"/><text x="325" y="49">B 209</text><text x="181" y="267">B 209</text><text x="220" y="79">B 5</text><text x="280" y="499">B</text><text x="51" y="165">404</text><text x="154" y="536">B 4</text></g>
          <g class="place"><text x="346" y="120">Lauenburg/</text><text x="346" y="134">Elbe</text><text x="597" y="129">Boizenburg/</text><text x="597" y="143">Elbe</text><text x="608" y="350">Bleckede</text></g>
          <text class="rail" x="741" y="127">Berlin-Hamburger Bahn</text>
          <path id="mvp" fill="none" d="M427 143q64 8 132-6"/>
          <text class="mvp"><textPath href="#mvp">Mecklenburg-Vorpommern</textPath></text>
          <g class="nature"><text x="655" y="357">Große Marsch</text><text x="661" y="369">und Garge</text><text x="673" y="381">Berge</text></g>
          <text class="r686" x="128" y="332">686</text>
          <g fill="#6fb6d0" fill-opacity=".2" stroke="#2a6f86" stroke-width="2"><path d="M380 369l-10 54 77 5v-71zM43 290l17-11 18 3 13 26-20-4z"/></g>
        </svg>

        <div class="mk"><span class="cl" style="left:132px;top:183px">2</span>
        <span class="cl" style="left:46px;top:210px">2</span>
        <span class="cl" style="left:98px;top:237px">2</span>
        <span class="cl" style="left:413px;top:258px">2</span>
        <span class="cl r" style="left:486px;top:184px">3</span>
        <span class="cl" style="left:500px;top:186px">2</span>
        <span class="cl" style="left:584px;top:194px">2</span>
        <span class="cl" style="left:91px;top:307px">6</span>
        <span class="cl r" style="left:112px;top:327px">4</span>
        <span class="cl r" style="left:190px;top:334px">4</span>
        <span class="cl" style="left:179px;top:339px">3</span>
        <span class="cl" style="left:10px;top:364px">2</span>
        <span class="cl" style="left:262px;top:322px">9</span>
        <span class="cl" style="left:376px;top:297px">2</span>
        <span class="cl" style="left:234px;top:374px">4</span>
        <span class="cl y" style="left:149px;top:413px">20</span>
        <span class="cl y" style="left:120px;top:451px"></span>
        <span class="cl r" style="left:151px;top:452px"></span>
        <span class="cl" style="left:246px;top:443px">2</span>
        <span class="cl y" style="left:92px;top:515px">10</span>
        <span class="cl r" style="left:306px;top:486px">2</span>
        <span class="cl" style="left:303px;top:495px">3</span>
        <span class="cl" style="left:369px;top:460px">8</span>
        <span class="cl" style="left:199px;top:535px">5</span>
        <span class="cl" style="left:538px;top:287px">2</span>
        <span class="cl" style="left:598px;top:333px">6</span>
        <span class="cl r" style="left:611px;top:348px">3</span>
        <span class="cl y" style="left:569px;top:403px">10</span>
        <span class="cl" style="left:463px;top:419px">6</span>
        <span class="cl" style="left:475px;top:497px">2</span>
        <span class="cl" style="left:776px;top:462px">2</span>

        <svg class="pin" style="left:199px;top:168px"><use href="#pin"/></svg>
        <svg class="pin" style="left:319px;top:204px"><use href="#pin"/></svg>
        <svg class="pin" style="left:395px;top:182px"><use href="#pin"/></svg>
        <svg class="pin green" style="left:468px;top:263px"><use href="#pin"/></svg>
        <svg class="pin pale" style="left:75px;top:386px"><use href="#pin"/></svg>
        <svg class="pin gold" style="left:107px;top:351px"><use href="#pin"/></svg>
        <svg class="pin yel" style="left:55px;top:424px"><use href="#pin"/></svg>
        <svg class="pin" style="left:315px;top:325px"><use href="#pin"/></svg>
        <svg class="pin" style="left:197px;top:413px"><use href="#pin"/></svg>
        <svg class="pin red" style="left:396px;top:495px"><use href="#pin"/></svg>
        <svg class="pin pale" style="left:711px;top:366px"><use href="#pin"/></svg>
        <svg class="pin" style="left:568px;top:488px"><use href="#pin"/></svg>
        <svg class="pin red" style="left:472px;top:543px"><use href="#pin"/></svg>
        <svg class="flag" style="left:362px;top:143px"><use href="#flag"/></svg>
        <svg class="flag" style="left:567px;top:361px"><use href="#flag"/></svg>
        <svg class="flag" style="left:694px;top:370px"><use href="#flag"/></svg>
        <svg class="flag" style="left:779px;top:430px"><use href="#flag"/></svg>

        <span class="lab" style="left:120px;top:195px"><b>2</b>19-17-24 / Lüdershausen</span>
        <span class="lab" style="left:326px;top:211px"><b>2</b>19-40-34 / Hittbergen</span>
        <span class="lab" style="left:260px;top:232px"><b>2</b>19-47-40 / Echem</span>
        <span class="ev" style="left:319px;top:193px"><b>65</b>Autoeinsatz</span>
        <span class="lab" style="left:399px;top:290px"><b class="y">1</b>11-40-34 / Rosenthal</span>
        <span class="lab" style="left:252px;top:351px"><b>2</b>19-40-14 / Rullstorf</span>
        <span class="lab" style="left:78px;top:378px"><b>2</b>S1023</span>
        <span class="lab" style="left:114px;top:439px"><b>2</b>45-17-10 / SanW Lbg DRK</span>
        <span class="lab" style="left:-8px;top:413px"><b class="g">6</b>11-09-1 / Stadt Pressewart</span>
        <span class="lab" style="left:-15px;top:450px"><b>2</b>64-08-1 / ASB ORGL</span>
        <span class="lab" style="left:332px;top:522px"><b>2</b>10-01-1 / StBM Lbg</span>
        <span class="lab" style="left:482px;top:515px"><b class="o">3</b>41-00-1 / DRK RW Elringen</span>
        <span class="lab" style="left:644px;top:393px"><b class="y">1</b>11-43-14 / Alt Garge</span>
        <span class="lab" style="left:818px;top:306px"><b class="y">1</b>11-17-33</span>
        <span class="lab" style="left:831px;top:348px"><b class="g">6</b>45-17-2</span>
        <span class="ev" style="left:651px;top:418px"><b>55</b>Autoeinsatz</span>
        <span class="ev only" style="left:554px;top:409px"><b>98</b></span>
        <span class="ev" style="left:741px;top:478px"><b>77</b>FEUER 3</span></div>

        <div class="mapinfo"><p>Aktiv: <b>Standard-Layer</b></p><span>53.21056 # 10.36217</span><span>590968 # 5896560 # 32U</span></div>
        <div class="mctl">
          <div class="mbox"><button class="zm">+</button><button class="zm">−</button></div>
          <div class="mbox layer"><button aria-label="Ebene"><svg viewBox="0 0 26 26"><path fill="#f0e9e0" d="M0 0h26v26H0z"/><path fill="#7dbb6a" d="M16 10l10-8v24H14zM0 20l8-4v10H0z"/><path fill="none" stroke="#ee7f70" stroke-width="3.500" d="M0 16 26 4M12 0v26M0 20 16 8"/></svg></button></div>
          <div class="mbox draw">
            <button aria-label="Linie"><svg viewBox="0 0 14 14"><path d="m2 12 10-10" stroke="#444" stroke-width="1.500"/><path d="M10 0h4v4h-4zM0 10h4v4H0z"/></svg></button>
            <button aria-label="Polygon"><svg viewBox="0 0 14 14"><path d="m7 1 6 4-2 8H3L1 5z"/></svg></button>
            <button aria-label="Rechteck"><svg viewBox="0 0 14 14"><path d="M2 2h10v10H2z"/></svg></button>
            <button aria-label="Kreis"><svg viewBox="0 0 14 14"><circle cx="7" cy="7" r="5.500"/></svg></button>
          </div>
          <div class="mbox"><button aria-label="Farben"><svg class="i20" viewBox="0 0 20 20"><g><circle cx="4" cy="4" r="1.800" fill="#3a56c0"/><circle cx="9" cy="2" r="1.800" fill="#7a3ac0"/><circle cx="14" cy="3" r="1.800" fill="#2a9ac0"/><circle cx="18" cy="7" r="1.800" fill="#c03ab0"/><circle cx="1.800" cy="9" r="1.800" fill="#3ac06a"/></g><path fill="#a22" d="m4 7 7-2 3 5-7 4z"/><path fill="#f6c04a" stroke="#c87" d="m9 8 7-3 3 9-7 4z"/><path stroke="#d33" stroke-width="2" d="M1 18h8"/></svg></button></div>
          <div class="mbox gap"><button class="sym">↦</button></div>
          <div class="mbox gap"><button class="sym">⊼</button></div>
        </div>
        <div class="scale">3 km</div>
        <div class="attrib">Map data © OpenStreetMap</div>
      </div>
      <div class="tabs">
        <button class="tab"><svg viewBox="0 0 24 24" fill="#555"><use href="#car" width="14" height="14"/><use href="#car" x="9" y="10" width="14" height="14"/></svg>Einsatzmittel</button>
        <button class="tab on"><svg viewBox="0 0 24 24"><circle cx="12" cy="12" r="9" fill="none" stroke="#555" stroke-width="2" stroke-dasharray="5 3"/><path fill="#555" d="M9 9l6 2-3 5z"/></svg>Karte</button>
        <button class="tab"><svg viewBox="0 0 24 24"><path fill="none" stroke="#555" stroke-width="2.500" d="m2 20 4-12 5 12zM13 20l4-12 5 12z"/></svg>Aktive User</button>
        <button class="tab"><svg class="w20" fill="#555" color="#555"><use href="#usb"/></svg>Schnittstellen</button>
      </div>
    </section>

    <section class="panel elist">
      <header class="bar"><h2>Einsatzliste</h2><button aria-label="Menü"><svg><use href="#tri"/></svg></button><button aria-label="Anheften"><svg><use href="#thumbtack"/></svg></button><button aria-label="Maximieren"><svg><use href="#maxi"/></svg></button><button aria-label="Schließen"><svg><use href="#cross"/></svg></button></header>
      <div class="el-top">
        <div class="search">
          <label for="q">Suche:</label><input id="q" type="text">
          <label class="arch"><input type="checkbox">Archiv</label>
          <div class="fb"><button class="gbtn wide" aria-label="Filtern"><svg viewBox="0 0 24 24"><use href="#funnel" width="17" height="18"/><use href="#bolt" x="9" y="6" width="14" height="18"/></svg></button><button class="gbtn" aria-label="Filter löschen"><svg viewBox="0 0 24 24"><use href="#funnel" width="19" height="20"/><path stroke="#e22" stroke-width="3" d="m9 10 13 13M22 10 9 23"/></svg></button></div>
        </div>
        <div class="filters">
          <label for="f">Filter:</label><select id="f"><option>offene</option></select>
          <label for="l">Lage:</label><select id="l"><option>Alle</option></select>
        </div>
        <div class="gbox biggrp">
          <button><svg viewBox="0 0 24 24"><path fill="#eee" stroke="#999" d="M5 1h14v7H5zM1 8h22v9H1zM5 15h14v8H5z"/><path fill="#3fb0dc" d="M5 7h14v4H5z"/></svg>Export</button>
          <button><svg><use href="#funnel"/></svg>Filter</button>
          <button><span class="zero">0</span><svg viewBox="0 0 24 24"><g fill="#f8f4e4" stroke="#e08a1a" stroke-width="2"><circle cx="8" cy="10" r="6.500"/><circle cx="16" cy="15" r="7"/></g><path fill="none" stroke="#555" d="M6 8l2 3 3-2M13 14l3 2 4-4M6 2l16 4" stroke-width="1.500" /></svg>Dauer</button>
          <button><svg><use href="#bolt"/></svg>zur Lage</button>
        </div>
        <div class="quad">
          <button aria-label="Sortierung"><svg viewBox="0 0 28 28"><text class="st" x="2" y="12">S</text><text class="st rd" x="3" y="25">T</text><path fill="#6d9ee6" stroke="#4a78c8" d="M16 2h6v13h5l-8 10-8-10h5z"/></svg></button>
          <button aria-label="Uhr"><svg viewBox="0 0 28 28"><circle cx="14" cy="14" r="11" fill="#fff" stroke="#d2303a" stroke-width="3"/><path fill="none" stroke="#a11" stroke-width="2" d="m8 10 6 4 4 6M14 14l6-2"/><circle cx="14" cy="14" r="8" fill="none" stroke="#c55" stroke-dasharray="1 3.200"/></svg></button>
          <button aria-label="Zeilenhöhe"><svg viewBox="0 0 28 28"><path fill="#555" d="M2 7h15v5H2zM2 16h15v5H2z"/><text class="n12" x="19" y="12">1</text><text class="n12" x="19" y="23">2</text></svg></button>
          <button class="ten"><svg viewBox="0 0 24 24"><circle cx="12" cy="12" r="10" fill="none" stroke="#888" stroke-width="2.500"/><path fill="none" stroke="#888" stroke-width="2.500" d="M12 5v8l5 3"/></svg>10min</button>
        </div>
        <div class="hits"><b>Treffer:</b><b>38</b></div>
      </div>
      <div class="el-table">
        <table>
          <colgroup><col class="k39"><col class="k49"><col class="k34"><col class="k39"><col class="k140"><col class="k27"><col class="k133"><col class="k144"><col class="k40"><col class="k101"><col></colgroup>
          <thead><tr><th>ENr</th><th>AP</th><th>G...</th><th>Prio</th><th>Zeit</th><th>St</th><th>Ort/Stadtteil</th><th>Straße/Zusatz</th><th>HNr</th><th>Objekt</th><th>Stichwort</th></tr></thead>
          <tbody>
          <tr><td>105</td><td></td><td>N...</td><td class="gr"></td><td class="ye">12:56 # 01.17.2024</td><td class="rd">E</td><td>/</td><td>/</td><td></td><td>/</td><td></td></tr>
          <tr class="sel"><td>100</td><td>POL1</td><td></td><td>2</td><td>16:15 # 15.07.2024</td><td>E</td><td>Bleckede/Wendewisch</td><td>Hittberger Str./</td><td>41</td><td>Alten- u.</td><td>Krankheitsfall</td></tr>
          <tr><td>103</td><td>POL1</td><td></td><td class="pk">P1</td><td>14:44 # 06.06.2024</td><td class="rd">E</td><td>Frankenthal</td><td>Seidelstr./</td><td>3</td><td>/</td><td>Wasser in Gebäude</td></tr>
          <tr class="c"><td>102</td><td>POL1</td><td></td><td class="gr"></td><td>14:31 # 06.06.2024</td><td class="rd">E</td><td>Barendorf/</td><td>Immenkorb/</td><td>3</td><td>/</td><td>Wasser in Gebäude</td></tr>
          <tr><td>101</td><td>POL1</td><td></td><td class="gr"></td><td>14:00 # 06.06.2024</td><td class="rd">E</td><td>Bardowick/</td><td>Kleine Brückenstraße/</td><td>5</td><td>/</td><td>Alarm in Gaststätte</td></tr>
          <tr class="c"><td>99</td><td></td><td>N...</td><td class="gr"></td><td>14:24 # 04.06.2024</td><td class="rd">E</td><td>Bleckede/</td><td>Instustriestr./</td><td>3</td><td>/</td><td></td></tr>
          <tr><td>98</td><td></td><td>N...</td><td class="gr"></td><td>12:39 # 04.06.2024</td><td class="rd">E</td><td>Bleckede/</td><td>Neetzer Kirchweg/</td><td>3</td><td>/</td><td></td></tr>
          <tr class="c"><td>97</td><td></td><td></td><td></td><td></td><td></td><td></td><td></td><td></td><td></td><td></td></tr>
          </tbody>
        </table>
        <div class="vscroll"><button aria-label="Hoch">▲</button><i></i><button aria-label="Runter">▼</button></div>
        <div class="hscroll"><button aria-label="Links">◀</button><i></i><button aria-label="Rechts">▶</button></div>
      </div>
    </section>
  </div>

  <div class="col">
    <section class="panel abschn">
      <header class="bar"><h2>Abschnitte</h2><button aria-label="Menü"><svg><use href="#tri"/></svg></button><button aria-label="Anheften"><svg><use href="#thumbtack"/></svg></button><button aria-label="Maximieren"><svg><use href="#maxi"/></svg></button><button aria-label="Schließen"><svg><use href="#cross"/></svg></button></header>
      <div class="abtools">
        <div class="ag"><button><svg viewBox="0 0 24 24"><use href="#eatree"/><path fill="#d22" d="M2 5h8v2H2z"/></svg>EA</button><button><svg viewBox="0 0 24 24"><use href="#eatree"/><path fill="#d22" d="M11 12h9v2h-9z"/></svg>UA</button><button><svg viewBox="0 0 24 24"><use href="#eatree"/><path fill="#8d2" d="M11 12h9v2h-9z"/></svg>Sonst.</button><button><svg viewBox="0 0 24 24"><use href="#eatree"/><path fill="#db2" d="M11 12h9v2h-9z"/></svg>Schaden</button></div>
        <div class="ag"><button><svg fill="#555"><use href="#printer"/></svg>Druck</button></div>
        <div class="ag"><button><svg viewBox="0 0 24 24" fill="#555"><path d="m12 2 10 11h-6v9H8v-9H2z"/></svg>Auf</button><button><svg viewBox="0 0 24 24" fill="#555"><path d="m12 22 10-11h-6V2H8v9H2z"/></svg>Ab</button><button><svg viewBox="0 0 24 24" fill="#555"><path d="M2 0h20v2H2zM12 3l9 10h-5v9H8v-9H3z"/></svg>Anfang</button></div>
        <div class="ag"><button><svg viewBox="0 0 24 24"><path fill="#fff" stroke="#245" stroke-width="1.500" d="M1 8c6-8 16-8 22 0-6 7-16 7-22 0z"/><circle cx="12" cy="8" r="5" fill="#18a0b4"/><circle cx="12" cy="8" r="2"/><path stroke="#444" stroke-width="3" stroke-dasharray="3 2" d="M1 20h10"/><path stroke="#d22" stroke-width="3" stroke-dasharray="3 2" d="M12 20h11"/></svg>ausblenden</button></div>
        <div class="ag"><button aria-label="Baum"><svg color="#666"><use href="#tree"/></svg></button></div>
      </div>
      <div class="abwrap">
        <table class="abt">
          <colgroup><col class="k17"><col class="k16"><col><col class="k21"><col class="k100"><col class="k24"></colgroup>
          <thead><tr><th colspan="3">Rufname</th><th>St</th><th>seit</th><th>Anz</th></tr></thead>
          <tbody>
          <tr class="g"><td class="tx"><i>−</i></td><td colspan="2">EA Bereitschaft</td><td></td><td></td><td></td></tr>
          <tr><td class="tx"></td><td class="br"></td><td>11-47-10 / Barskamp</td><td class="y">1</td><td>01.06.2024 09:15</td><td>1</td></tr>
          <tr><td class="tx"></td><td class="br e"></td><td>11-17-10 / Barskamp</td><td class="l">2</td><td>09.05.2024 20:12</td><td>1</td></tr>
          <tr class="g"><td class="tx"><i>−</i></td><td colspan="2">EA Nord</td><td></td><td></td><td></td></tr>
          <tr><td class="tx"></td><td class="br"></td><td>11-17-42 / Radegast</td><td class="l">2</td><td>10.03.2024 16:38</td><td>1</td></tr>
          <tr><td class="tx"></td><td class="br e"></td><td>11-40-44 / Brackede</td><td class="l">2</td><td>18.01.2023 18:52</td><td>1</td></tr>
          <tr class="g"><td class="tx"><i>−</i></td><td colspan="2">EA Süd</td><td></td><td></td><td></td></tr>
          <tr><td class="tx n"></td><td class="br"></td><td>11-02-1 / stellv StBM</td><td class="y">1</td><td>10.03.2024 16:49</td><td>1</td></tr>
          <tr><td class="tx n"></td><td class="br"></td><td>11-01-1 / StBM</td><td class="l">2</td><td>06.03.2024 10:07</td><td>1</td></tr>
          <tr><td class="tx n"></td><td class="br e"></td><td>11-79-11 / Fü Assistent</td><td class="l">2</td><td>13.11.2022 08:47</td><td>1</td></tr>
          </tbody>
        </table>
      </div>
      <div class="flatscroll"><span>‹</span><i></i><span>›</span></div>
      <div class="tabs">
        <button class="tab"><svg viewBox="0 0 24 24"><path fill="#fff8d8" stroke="#987" d="M3 2h18v15l-5 6H3z"/><path fill="#e8b84a" d="M3 4h4v18H3zM16 17h5l-5 6z"/></svg>Einsatzprotokoll</button>
        <button class="tab on"><svg viewBox="0 0 24 24"><path fill="none" stroke="#444" stroke-width="2" d="M4 1v22M4 3h15M4 12h18M4 21h15"/><path stroke="#2a9aa8" stroke-width="3" d="M8 7h13M8 17h13"/></svg>Abschnitte</button>
      </div>
    </section>

    <section class="panel signals">
      <header class="bar"><h2>Signale</h2><button aria-label="Menü"><svg><use href="#tri"/></svg></button><button aria-label="Anheften"><svg><use href="#thumbtack"/></svg></button><button aria-label="Maximieren"><svg><use href="#maxi"/></svg></button><button aria-label="Schließen"><svg><use href="#cross"/></svg></button></header>
      <div class="sigs">
        <button class="a w24">0</button><button class="b w24">5</button><button class="a w24">9</button><button class="c w40">St 3</button><button class="d w48">Termin</button><button class="e w32">App</button><button class="off w40">Text</button><button class="off w55">Tunstall</button><button class="f w39">Foto</button><button class="off w40">Video</button><button class="off w32">ZKN</button>
      </div>
    </section>

    <section class="panel verlauf">
      <header class="bar"><h2>Statusverlauf</h2><button aria-label="Menü"><svg><use href="#tri"/></svg></button><button aria-label="Anheften"><svg><use href="#thumbtack"/></svg></button><button aria-label="Maximieren"><svg><use href="#maxi"/></svg></button><button aria-label="Schließen"><svg><use href="#cross"/></svg></button></header>
      <label class="pocsag"><input type="checkbox">Liste mit 5-Ton und POCSAG-Eingängen einblenden</label>
      <table class="grid13 svt">
        <colgroup><col class="k57"><col class="k123"><col class="k43"><col class="k30"><col class="k33"><col class="k60"><col></colgroup>
        <thead><tr><th>Zeit</th><th>Rufname</th><th>Status</th><th>TKI</th><th>Rtg</th><th>Kanal</th><th>Text</th></tr></thead>
        <tbody>
        <tr><th>22:34:30</th><td>11-40-46 /</td><td>2 -&gt; 1</td><td></td><td class="rt">-&gt;L</td><td>PC</td><td></td></tr>
        <tr><th>22:34:25</th><td>11-17-20 / Bleckede</td><td>2 -&gt; 1</td><td></td><td class="rt">-&gt;L</td><td>PC</td><td></td></tr>
        <tr><th>22:34:23</th><td>11-17-12 /</td><td>2 -&gt; 1</td><td></td><td class="rt">-&gt;L</td><td>PC</td><td></td></tr>
        <tr><th>22:34:21</th><td>11-43-14 / Alt Garge</td><td>2 -&gt; 1</td><td></td><td class="rt">-&gt;L</td><td>PC</td><td></td></tr>
        </tbody>
      </table>
      <div class="oldscroll"><button aria-label="Links">◀</button><i></i><button aria-label="Rechts">▶</button></div>
      <div class="tabs bt">
        <button class="tab"><svg viewBox="0 0 24 24"><path fill="#f9e0b8" stroke="#c77a20" stroke-width="2" d="M2 4h20v16H2zM2 9h20M2 14h20M8 4v16"/></svg>Signalliste</button>
        <button class="tab"><svg fill="#555"><use href="#phone"/></svg>Telefoneingänge</button>
        <button class="tab on"><svg viewBox="0 0 24 24"><text class="n34" x="0" y="12">3</text><text class="n34" x="11" y="23">4</text><path stroke="#333" stroke-width="2" d="M4 22 20 4"/></svg>Statusverlauf</button>
      </div>
    </section>
  </div>
  </main>
</div>
</body>
</html>
```
FILE: styles.css
```css
* { box-sizing: border-box; margin: 0; }
body {
  min-height: 100vh; display: flex; flex-direction: column;
  font: 11px/14px "Liberation Sans", Arial, sans-serif; color: #444; background: #fff6da;
}
button { font: inherit; color: #000; background: none; border: 0; padding: 0; white-space: nowrap; }
svg { display: block; flex: none; }
table { border-collapse: collapse; }
input[type=checkbox] { appearance: none; width: 13px; height: 13px; background: #fff; border: 1px solid #1f5178; margin: 0; flex: none; }
.sprite { position: absolute; width: 0; height: 0; }

/* title and info bars */
.titlebar { height: 23px; background: #fff; display: flex; align-items: center; padding-left: 4px; gap: 5px; font: 11px/16px "Open Sans", "Noto Sans", sans-serif; color: #8a8a8a; }
.lamp { width: 15px; height: 15px; }
.wincontrols { margin-left: auto; display: flex; }
.wincontrols button { width: 46px; display: grid; place-items: center; }
.wincontrols svg { width: 12px; height: 12px; fill: none; stroke: #888; stroke-width: 1; }
.wincontrols button:last-child { padding-right: 2px; }
.infobar { height: 25px; display: flex; border-top: 1px solid #888; border-bottom: 1px solid #666; background: #fff6da; }
.logo { width: 105px; display: flex; align-items: center; justify-content: center; background: #f2eee6; font: italic 18px/20px "DejaVu Sans Mono", monospace; color: #222; }
.logo svg { width: 26px; height: 18px; }
.cell { border-left: 1px solid #888; padding: 4px 0 0 2px; white-space: nowrap; overflow: hidden; }
.c-host { width: 168px; } .c-server { width: 152px; } .c-mode { width: 128px; } .c-lage { width: 256px; } .c-user { width: 246px; }
.c-ap { flex: 1; border: 0; }
.swap { width: 32px; background: #c4e6c4; border: 1px solid #00b400; display: grid; place-items: center; }
.swap svg { width: 24px; height: 17px; fill: #444; }

/* main toolbar */
.toolbar { height: 60px; display: flex; background: #ffe4b5; border-bottom: 2px solid #ffd0a0; padding-top: 2px; }
.version { width: 105px; display: flex; flex-direction: column; align-items: center; padding: 6px 24px 0 16px; gap: 3px; color: #222; }
.version span { margin-left: 16px; }
.version button { align-self: flex-start; width: 25px; height: 17px; background: #c8ecc4; border: 1px solid #00b400; font-weight: bold; }
.tgroup { display: flex; padding: 0 7px; border-right: 1px solid #f0bf90; box-shadow: 1px 0 #fff1d8; height: 55px; }
.version + .tgroup { padding-left: 1px; }
.tool { padding: 1px 3px 0; display: flex; flex-direction: column; align-items: center; gap: 3px; }
.tool svg { width: 28px; height: 30px; }
.tool .w32 { width: 32px; }
.tool text { font: bold 13px "Liberation Sans", sans-serif; }
.statusboxes { display: flex; gap: 4px; padding: 2px 98px 0 6px; border-right: 1px solid #f0bf90; height: 55px; }
.sbox { width: 121px; height: 49px; border: 1px solid #b8b8c0; background: #fff6da; padding: 0 7px; display: flex; flex-direction: column; }
.sbox span { white-space: nowrap; }
.ok-line { width: 64px; height: 4px; background: #0f0; border: 1px solid #286; margin: 1px 0 4px; }
.ind { margin-left: 4px; }
.tmpl { padding-left: 16px; gap: 9px; }
.statusboxes + .tgroup { border: 0; box-shadow: none; }
.hell { display: flex; gap: 4px; padding: 16px 4px; align-self: flex-start; }

/* workspace */
.workspace { flex: 1; display: flex; background: #d6e4f8; min-height: 0; }
.side { width: 105px; background: #ffe4b5; display: flex; flex-direction: column; }
.side > button { height: 34px; width: 104px; display: flex; align-items: center; gap: 9px; padding-left: 14px; border: 1px solid #c9c1b2; border-top: 0; background: linear-gradient(#fce0b2, #e6cda0); overflow: hidden; flex: none; }
.side svg { width: 24px; height: 24px; }
.side .big { width: 28px; height: 26px; margin: 0 -2px; }
.side .small { width: 20px; height: 20px; margin: 0 2px; }
.etb { font: bold 10px "Liberation Sans", sans-serif; }
.side-foot { margin-top: auto; }
.side-foot label { display: flex; align-items: center; gap: 4px; height: 32px; padding-left: 7px; border: 1px solid #777; }
.side-foot span { display: grid; place-items: center; height: 34px; border: 1px solid #777; border-top: 0; background: #fff6da; color: #999; }
.strip { width: 22px; background: #9dbbf3; padding-top: 2px; }
.vtab { width: 19px; height: 102px; writing-mode: vertical-rl; border: 1px solid #335b9c; border-left: 0; border-radius: 0 4px 4px 0; background: linear-gradient(90deg, #ffe2b8, #ffc98a); padding: 8px 0 0; text-align: left; font-size: 12px; }
.vicon { font-size: 8px; margin-bottom: 8px; display: inline-block; }
.cols { flex: 1; display: grid; grid-template-columns: 486fr 861fr 431fr; gap: 4px; padding-right: 7px; min-width: 0; }
.col { display: flex; flex-direction: column; gap: 5px; min-width: 0; min-height: 0; }
.panel { display: flex; flex-direction: column; background: #fff6da; min-width: 0; }
.grow { flex: 1; }
.bar { height: 25px; flex: none; display: flex; align-items: center; padding: 0 3px 0 5px; background: linear-gradient(#4b7bd3, #2a58b5 55%, #0a2f94); border: 1px solid #0b3195; }
.bar h2 { flex: 1; font: bold 16px/20px "Liberation Sans", Arial, sans-serif; color: #fff; white-space: nowrap; }
.bar button { width: 16px; height: 16px; }
.bar svg { width: 16px; height: 16px; fill: #fff; }
.tabs { display: flex; height: 22px; padding-left: 2px; border-top: 2px solid #5a86c8; background: linear-gradient(#f6faff, #c6daf6); flex: none; }
.tab { height: 19px; display: flex; align-items: center; gap: 5px; padding: 0 4px; font: 11px/16px "Open Sans", "Noto Sans", sans-serif; border: 1px solid #335b9c; border-top: 0; border-radius: 0 0 4px 4px; background: linear-gradient(#c6daf8, #a8c4f0); }
.tab.on { background: linear-gradient(#ffd9a4, #ffc684); }
.tab svg { width: 14px; height: 14px; }
.tab .w20 { width: 18px; height: 8px; }
.ebt { padding-left: 22px; }

/* green button boxes */
.gbox { border: 1px solid #00b800; border-radius: 3px; background: linear-gradient(#daf4d9, #c5dfc5); }
.gbox button { font-weight: bold; display: flex; align-items: center; }
.gbox svg { width: 14px; height: 14px; }
.gbox .i18 { width: 17px; height: 17px; }

.eb-top { display: flex; padding: 8px 7px 9px 16px; }
.eb-main { flex: 264; height: 39px; display: flex; padding: 10px 0; }
.eb-main button { flex: 1; gap: 10px; padding-left: 10px; }
.eb-main button + button { border-left: 1px solid #00b800; padding-left: 22px; }
.enr { flex: 160; display: flex; flex-direction: column; align-items: center; gap: 1px; }
.enr b { font-size: 16px; line-height: 21px; color: #0060b4; margin-right: 16px; }
.enr span { font: 16px/16px "Open Sans", "Noto Sans", sans-serif; margin-right: 24px; }
.gbox.person { width: 39px; height: 39px; display: grid; place-items: center; }
.person svg { width: 18px; height: 18px; }
.ebwrap { margin: 0 5px 0 8px; border: 1px solid #bbb; border-radius: 6px; overflow: hidden; height: 489px; }
.ebtable { width: 100%; table-layout: fixed; }
.ebtable th:first-child { width: 105px; }
.ebtable thead tr { height: 28px; background: linear-gradient(#fcd3a6, #d2a274); }
.ebtable thead th { color: #000; }
.ebtable th, .ebtable td { height: 23px; padding: 0 4px 0 3px; border: 1px solid #c4c4c8; border-left: 0; border-right: 0; text-align: left; font-size: 13px; line-height: 15px; white-space: nowrap; }
.ebtable th:first-child { border-right: 1px solid #c4c4c8; }
.ebtable thead th { border-top: 0; }
.ebtable td, .ebtable thead th + th { font: bold 12px/16px "Noto Sans", "Open Sans", sans-serif; color: #0060b4; padding-left: 4px; }
.ebtable thead th + th { color: #000; }
.ebtable .w { background: #fffcf4; }
.ebtable .last th { height: 25px; }
.prio { display: inline-block; width: 88px; }
.eb-actions { display: flex; padding: 8px 11px 4px 8px; }
.stack { height: 73px; display: flex; flex-direction: column; }
.stack > button { flex: 1; gap: 6px; min-height: 0; }
.s1 { flex: 125 1 125px; padding: 0 6px 0 9px; margin-right: 11px; }
.s2 { flex: 93 1 93px; padding: 0 6px 0 9px; margin-right: 11px; }
.s1 button + button, .s2 button + button { border-top: 1px solid #00b800; }
.s3 { flex: 60 1 60px; border-radius: 12px; overflow: hidden; margin-right: 12px; }
.s3 button { padding-left: 10px; }
.s3 button:first-child { background: linear-gradient(#fdfccb, #eeeca0); }
.s3 button + button { border-top: 2px solid #63c863; }
.s4 { flex: 155 1 155px; }
.s4 > button { justify-content: center; gap: 14px; }
.s4 > * + * { border-top: 1px solid #00b800; }
.mini { display: flex; padding: 4px 0; height: 23px; }
.mini button { flex: 1; justify-content: center; }
.mini button + button { border-left: 1px solid #00b800; }
.mini svg { width: 11px; height: 11px; }
.hrow { height: 31px; display: flex; padding: 7px 0; margin: 0 10px 4px 8px; flex: none; }
.hrow button { flex: 1; justify-content: center; gap: 11px; min-width: 0; }
.hrow button + button { border-left: 1px solid #00b800; }
.em .hrow { margin-top: 3px; }
.hints { display: flex; justify-content: space-between; font-size: 13px; line-height: 18px; padding: 1px 11px 8px 8px; white-space: nowrap; }
.emlist { margin: 0 0 5px 8px; background: #fffcf4; flex: 1; }
.grid13 { width: 100%; table-layout: fixed; font-size: 12px; line-height: 15px; }
.grid13 thead th { background: #ffc890; color: #000; font-weight: normal; text-align: left; padding: 0 2px; height: 17px; border-right: 1px solid #000; border-bottom: 1px solid #000; white-space: nowrap; overflow: hidden; }
.grid13 th:last-child { border-right: 0; }
.em-n { width: 153px; }

/* map panel */
.maptools { height: 40px; border: 1px solid #00b800; background: #daf4d9; flex: none; }
.mt-in { width: 657px; height: 38px; background: linear-gradient(#daf4d9, #c5dcc5); display: flex; }
.mt-in button { flex: 1; display: grid; place-items: center; }
.mt-in svg { width: 24px; height: 24px; }
.mt-in .w26 { width: 26px; height: 25px; }
.bigt { font: bold 22px "Liberation Serif", serif; fill: #444; }
.ext, .bulk { font: 11px "Liberation Sans", sans-serif; fill: #333; }
.wms { font: bold 11px "Liberation Sans", sans-serif; }
.met { font: 10px "Liberation Sans", sans-serif; fill: #fff; }
.map { position: relative; flex: 1; min-height: 300px; overflow: hidden; background: #f2f3dd; }
.ground { position: absolute; inset: 0; width: 100%; height: 100%; }
.shield text, .place text, .rail, .nature text, .mvp, .r686 { font-family: "Noto Sans", "Open Sans", sans-serif; text-anchor: middle; font-size: 10px; fill: #6b4a2f; }
.place text, .rail, .nature text, .mvp { stroke: rgba(255, 255, 255, .6); stroke-width: 2px; paint-order: stroke; }
.place text { font-size: 11px; fill: #333; }
.rail { font-size: 10px; fill: #888; }
.mvp { font-size: 10px; fill: #8a6f98; text-anchor: start; }
.nature text { font-style: italic; fill: #3a8a4a; text-anchor: start; }
.r686 { fill: #c03050; }
.cl { position: absolute; width: 40px; height: 40px; margin: -20px; border: 5px solid rgba(181, 226, 140, .7); border-radius: 50%; background: rgba(110, 204, 57, .75); background-clip: padding-box; display: grid; place-items: center; color: #111; font: 12px/14px "Open Sans", sans-serif; }
.cl.y { border-color: rgba(241, 211, 87, .6); background-color: rgba(240, 194, 12, .75); }
.cl.r { width: 32px; height: 32px; margin: -16px; border: 0; background: rgba(255, 85, 85, .85); font: 22px/24px "Liberation Sans", sans-serif; }
.pin { position: absolute; width: 30px; height: 39px; margin: -15px; color: #777; }
.pin.green { color: #5f9a3a; --car: #555; }
.pin.gold { color: #a8892c; --car: #666; }
.pin.pale { color: #d8d8d8; --car: #666; }
.pin.yel { color: #e2cc30; --car: #777; }
.pin.red { color: #bb2a32; --car: #666; }
.flag { position: absolute; width: 32px; height: 46px; }
.lab { position: absolute; height: 22px; display: flex; align-items: center; border: 1px solid #8b8b8b; background: rgba(140, 240, 120, .92); font: 12px/20px "Liberation Sans", sans-serif; color: #333; white-space: nowrap; padding-right: 4px; }
.lab b { width: 15px; margin-right: 4px; text-align: center; background: #86f810; color: #223; }
.lab b.y { background: #ffff80; }
.lab b.g { background: #8a8a8a; }
.lab b.o { background: #ff8a10; }
.ev { position: absolute; height: 25px; display: flex; align-items: center; border: 2px solid #96453c; border-radius: 3px; background: rgba(255, 255, 255, .85); font: 10px/20px "Noto Sans", "Liberation Sans", sans-serif; color: #333; padding-right: 3px; white-space: nowrap; }
.ev b { width: 24px; margin-right: 4px; text-align: center; background: rgba(252, 110, 105, .9); font: 14px/21px "Liberation Sans", sans-serif; color: #554; }
.ev.only { padding: 0; }
.ev.only b { margin: 0; }
.lab::before, .ev::before { content: ""; position: absolute; top: -5px; left: 50%; margin-left: -5px; border: 5px solid transparent; border-top: 0; border-bottom-color: #fff; }
.mapinfo { position: absolute; left: 58px; top: 42px; width: 180px; height: 60px; border: 1px solid #999; background: rgba(240, 240, 220, .75); text-align: center; color: #000; font: 14px/18px "Liberation Serif", serif; }
.mapinfo p { font-size: 17px; line-height: 22px; }
.mapinfo span { display: block; }
.mctl { position: absolute; left: 10px; top: 10px; display: flex; flex-direction: column; gap: 10px; align-items: flex-start; }
.mbox { border: 2px solid rgba(0, 0, 0, .25); background: #fff; background-clip: padding-box; border-radius: 4px; display: flex; flex-direction: column; }
.mbox button { width: 30px; height: 30px; display: grid; place-items: center; }
.mbox button + button { border-top: 1px solid #ccc; height: 31px; }
.mbox.layer button { width: 44px; height: 44px; }
.mbox svg { width: 12px; height: 12px; fill: #444; }
.mbox.layer svg { width: 26px; height: 26px; }
.mbox .i20 { width: 20px; height: 20px; }
.mbox .zm { font: bold 20px/24px "Liberation Sans", sans-serif; }
.mbox .sym { font: bold 14px/20px "DejaVu Sans", sans-serif; }
.scale { position: absolute; left: 5px; bottom: 5px; width: 66px; height: 17px; padding-left: 5px; border: 2px solid #777; border-top: 0; background: rgba(255, 255, 255, .6); color: #333; }
.attrib { position: absolute; right: 0; bottom: 0; padding: 1px 5px; background: rgba(255, 255, 255, .7); color: #222; }

/* mission list */
.elist { height: 306px; flex: none; }
.el-top { display: flex; padding: 3px 8px 4px; height: 56px; }
.search { display: grid; grid-template-columns: 56px 105px; grid-template-rows: 24px 22px; margin-right: 15px; padding-top: 2px; }
.search > label { padding-top: 3px; }
.search > input { height: 21px; border: 1px solid #777; background: #fff; padding: 0; }
.search .arch { display: flex; gap: 3px; align-items: flex-start; padding-top: 3px; }
.fb { display: flex; justify-content: space-between; }
.gbtn { width: 33px; height: 21px; border: 1px solid #00b800; background: linear-gradient(#daf4d9, #b5e0b5); display: grid; place-items: center; }
.gbtn.wide { width: 49px; }
.gbtn svg { width: 16px; height: 16px; }
.filters { display: grid; grid-template-columns: 32px 129px; grid-auto-rows: 24px; row-gap: 1px; margin-right: 7px; }
.filters label { padding-top: 4px; }
.filters select { appearance: none; height: 24px; border: 1px solid #aaa; border-radius: 0; color: #000; padding: 0 4px; font: 12px/16px "Open Sans", "Noto Sans", sans-serif; background: #e1e1e1 url("data:image/svg+xml,%3Csvg xmlns='http://www.w3.org/2000/svg' width='9' height='6'%3E%3Cpath d='m.5.5 4 4 4-4' fill='none' stroke='%23444'/%3E%3C/svg%3E") no-repeat right 4px center; }
.biggrp { width: 208px; height: 49px; border-radius: 5px; display: flex; margin-right: 8px; }
.biggrp button { flex: 1; flex-direction: column; align-items: center; gap: 2px; padding-top: 5px; position: relative; }
.biggrp svg { width: 22px; height: 22px; }
.zero { position: absolute; top: -1px; right: 14px; font-weight: normal; font-size: 10px; line-height: 12px; }
.quad { display: flex; border: 1px solid #00b800; height: 50px; background: linear-gradient(#daf4d9, #c5dcc5); }
.quad button { width: 42px; display: grid; place-items: center; align-content: center; }
.quad button + button { border-left: 2px solid #63c863; }
.quad svg { width: 26px; height: 26px; }
.quad .ten { width: 41px; font: 11px/12px "Noto Sans", sans-serif; color: #777; }
.quad .ten svg { width: 16px; height: 16px; }
.st { font: bold 13px "Liberation Sans", sans-serif; }
.st.rd { fill: #c00; }
.n12, .n34 { font: bold 11px "Liberation Sans", sans-serif; fill: #555; }
.n34 { font-size: 15px; fill: #222; }
.hits { display: flex; flex-direction: column; gap: 8px; padding: 6px; align-items: center; }
.el-table { position: relative; margin: 0 3px 4px 8px; flex: 1; min-height: 0; border: 1px solid #bbb; border-radius: 6px; overflow: hidden; }
.el-table table { width: 100%; table-layout: fixed; font: 12px/16px "Open Sans", "Noto Sans", sans-serif; }
.el-table thead tr { height: 28px; background: linear-gradient(#fcd3a6, #d2a274); }
.el-table th, .el-table td { text-align: left; padding: 0 3px; border-right: 1px solid #c4c4c8; border-bottom: 1px solid #c4c4c8; white-space: nowrap; overflow: hidden; }
.el-table th { font-size: 12px; color: #000; }
.el-table tbody tr { height: 25px; background: #fffcf4; }
.el-table tbody .c { background: #fff6da; }
.el-table tbody .sel { background: #ffc890; }
.el-table .gr { background: #b9b9b9; }
.el-table .rd { background: #f00; color: #7c1414; }
.el-table .ye { background: #ffff80; }
.el-table .pk { background: #ffbdfb; }
.k39 { width: 39px; } .k49 { width: 49px; } .k34 { width: 34px; } .k140 { width: 140px; } .k27 { width: 27px; } .k133 { width: 133px; } .k144 { width: 144px; } .k40 { width: 40px; } .k101 { width: 101px; }
.k17 { width: 17px; } .k16 { width: 16px; } .k21 { width: 21px; } .k100 { width: 100px; } .k24 { width: 24px; }
.k57 { width: 57px; } .k123 { width: 123px; } .k43 { width: 43px; } .k30 { width: 30px; } .k33 { width: 33px; } .k60 { width: 60px; }
.vscroll, .hscroll { position: absolute; display: flex; background: #f4f2ea; }
.vscroll { top: 28px; right: 0; bottom: 20px; width: 20px; flex-direction: column; }
.hscroll { left: 5px; right: 0; bottom: 0; height: 20px; padding-right: 20px; }
.vscroll button, .hscroll button, .oldscroll button { background: #f0f0f0; border: 1px solid #888; font: 8px/8px "DejaVu Sans", sans-serif; width: 18px; }
.vscroll button { width: 20px; height: 17px; }
.vscroll i { height: 21px; border: 1px solid #888; background: #f0f0f0; margin-bottom: auto; }
.hscroll i { width: 320px; border: 1px solid #888; background: #f0f0f0; margin-right: auto; }

/* sections */
.abschn { flex: 447 0 0; }
.abtools { display: flex; height: 50px; background: #ffe4b5; border-bottom: 1px solid #ffc89a; flex: none; }
.ag { display: flex; padding: 0 7px; border-right: 1px solid #e8b890; height: 46px; }
.ag:first-child { padding-left: 2px; }
.ag:last-child { border: 0; }
.ag button { min-width: 28px; display: flex; flex-direction: column; align-items: center; gap: 3px; padding: 5px 3px 0; }
.ag svg { width: 20px; height: 20px; }
.abwrap { flex: 1; min-height: 0; padding-top: 6px; overflow: hidden; }
.abt { width: 100%; table-layout: fixed; font-size: 13px; line-height: 16px; color: #000; border-top: 1px solid #888; }
.abt th { height: 18px; font: 11px/14px "Open Sans", "Noto Sans", sans-serif; background: #f0f0f0; border-right: 1px solid #888; border-bottom: 1px solid #888; padding: 0; }
.abt tr { height: 22px; }
.abt thead tr { height: 18px; }
.abt td { border: 1px solid #777; padding: 0 3px; white-space: nowrap; overflow: hidden; height: 22px; }
.abt td:last-child { text-align: right; padding-right: 0; border-right: 0; }
.abt .g td { background: #92b4e8; font-weight: bold; padding: 0 1px; }
.abt .g td.tx, .abt .tx { background: #fff6da; border-top: 0; border-bottom: 0; border-left: 0; text-align: center; }
.abt .tx { background: linear-gradient(90deg, transparent 7px, #bbb 7px, #bbb 8px, transparent 8px); }
.abt .tx.n { background: none; }
.abt tbody tr:last-child .tx { border-bottom: 1px solid #777; }
.abt i { display: block; width: 9px; height: 9px; margin-left: 3px; border: 1px solid #444; font: bold 9px/7px "Liberation Sans", sans-serif; background: #fff6da; }
.abt .br { background: linear-gradient(#bbb, #bbb) 8px 11px / 7px 1px no-repeat, linear-gradient(#bbb, #bbb) 8px 0 / 1px 100% no-repeat; }
.abt .br.e { background: linear-gradient(#bbb, #bbb) 8px 11px / 7px 1px no-repeat, linear-gradient(#bbb, #bbb) 8px 0 / 1px 11px no-repeat; }
.abt .y { background: #ffff80; }
.abt .l { background: #80ff00; }
.flatscroll { height: 17px; display: flex; align-items: center; background: #f0f0f0; flex: none; font: bold 14px/14px "DejaVu Sans", sans-serif; color: #555; }
.flatscroll span { width: 18px; text-align: center; }
.flatscroll i { width: 163px; height: 15px; background: #cdcdcd; margin-right: auto; }
.signals { flex: none; }
.sigs { height: 36px; display: flex; padding: 6px; border: 2px solid #f00; border-bottom: 0; }
.sigs button { height: 24px; border: 1px solid #00b800; border-right-width: 0; font-weight: bold; font-size: 11px; }
.sigs .a { background: #ff2626; } .sigs .b { background: #55ff55; }
.sigs .c { background: linear-gradient(#bfe2ff, #9cc2ec); }
.sigs .d { background: linear-gradient(#ffdfb0, #f2c48c); }
.sigs .e { background: linear-gradient(#fffbe0, #d4f0c0); border-right-width: 1px; }
.sigs .f { background: linear-gradient(#dcdcdc, #bdbdbd); border-left-width: 0; }
.sigs .off { color: #888; border: 1px solid #efe8cf; background: #fdf8e4; }
.w24 { width: 24px; } .w40 { width: 40px; } .w48 { width: 48px; } .w32 { width: 32px; } .w55 { width: 56px; } .w39 { width: 39px; }
.verlauf { flex: 414 0 0; }
.pocsag { display: flex; gap: 3px; height: 17px; padding-top: 1px; }
.svt th { padding: 0 2px; }
.svt tbody { font-size: 13px; }
.svt tbody th { background: #ffc890; color: #000; font-weight: normal; border-bottom: 1px solid #000; border-right: 1px solid #000; height: 19px; text-align: left; }
.svt td { color: #0a62b4; border: 1px solid #ffcf9c; padding: 0 3px; height: 19px; white-space: nowrap; overflow: hidden; }
.svt td:last-child { border-right: 0; }
.svt .rt { text-align: right; padding: 0 2px; }
.svt tbody tr:last-child td { border-bottom: 1px solid #000; }
.oldscroll { display: flex; height: 18px; margin-top: auto; background: #f7f4ea; flex: none; }
.oldscroll i { width: 18px; border: 1px solid #888; background: #f0f0f0; margin-right: auto; }
.tabs.bt { margin-top: 2px; height: 23px; }
```
